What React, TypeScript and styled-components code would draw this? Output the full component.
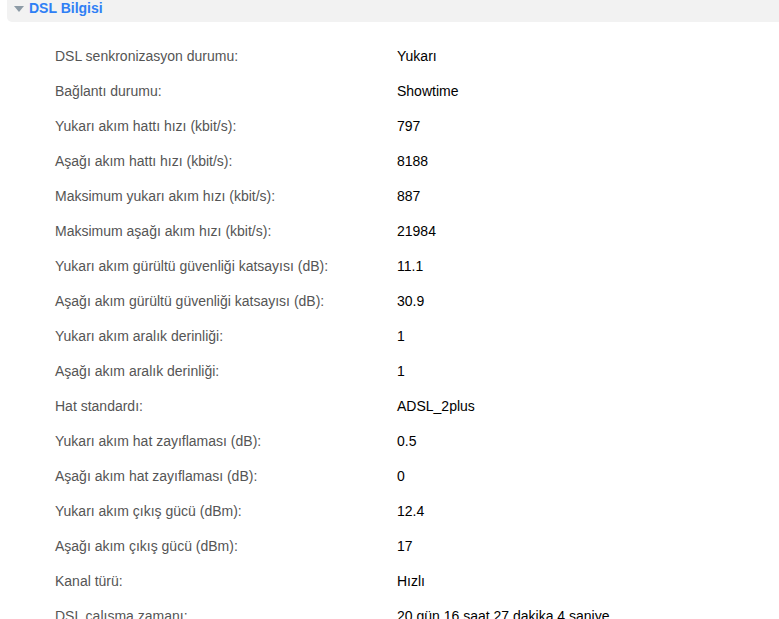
import React from 'react'
import styled, { createGlobalStyle } from 'styled-components'

const GlobalStyle = createGlobalStyle`
    html, body {
        margin: 0;
        padding: 0;
        background: #ffffff;
        font-family: "Liberation Sans", Arial, sans-serif;
        overflow: hidden;
    }
`

const Page = styled.div`
    width: 779px;
    height: 619px;
    overflow: hidden;
`

const SectionHeader = styled.div`
    display: flex;
    align-items: center;
    gap: 5px;
    height: 22px;
    margin-left: 7px;
    padding: 0 0 6px 7px;
    box-sizing: border-box;
    background-color: #f2f2f2;
    border-radius: 0 0 0 5px;
`

const Caret = styled.span`
    width: 0;
    height: 0;
    border-left: 5px solid transparent;
    border-right: 5px solid transparent;
    border-top: 6px solid #8d9ba6;
    margin-top: 2px;
`

const Title = styled.span`
    font-size: 14px;
    font-weight: bold;
    color: #2f7ff5;
    line-height: 16px;
`

const InfoTable = styled.div`
    display: grid;
    grid-template-columns: 342px 1fr;
    grid-auto-rows: 35px;
    align-items: center;
    padding: 16px 0 0 55px;
`

const Label = styled.div`
    font-size: 14px;
    color: #555555;
`

const Value = styled.div`
    font-size: 14px;
    color: #000000;
`

const rows: [string, string][] = [
    ['DSL senkronizasyon durumu:', 'Yukarı'],
    ['Bağlantı durumu:', 'Showtime'],
    ['Yukarı akım hattı hızı (kbit/s):', '797'],
    ['Aşağı akım hattı hızı (kbit/s):', '8188'],
    ['Maksimum yukarı akım hızı (kbit/s):', '887'],
    ['Maksimum aşağı akım hızı (kbit/s):', '21984'],
    ['Yukarı akım gürültü güvenliği katsayısı (dB):', '11.1'],
    ['Aşağı akım gürültü güvenliği katsayısı (dB):', '30.9'],
    ['Yukarı akım aralık derinliği:', '1'],
    ['Aşağı akım aralık derinliği:', '1'],
    ['Hat standardı:', 'ADSL_2plus'],
    ['Yukarı akım hat zayıflaması (dB):', '0.5'],
    ['Aşağı akım hat zayıflaması (dB):', '0'],
    ['Yukarı akım çıkış gücü (dBm):', '12.4'],
    ['Aşağı akım çıkış gücü (dBm):', '17'],
    ['Kanal türü:', 'Hızlı'],
    ['DSL çalışma zamanı:', '20 gün 16 saat 27 dakika 4 saniye'],
]

export default function App() {
    return (
        <Page>
            <GlobalStyle />
            <SectionHeader>
                <Caret />
                <Title>DSL Bilgisi</Title>
            </SectionHeader>
            <InfoTable>
                {rows.map(([label, value]) => (
                    <React.Fragment key={label}>
                        <Label>{label}</Label>
                        <Value>{value}</Value>
                    </React.Fragment>
                ))}
            </InfoTable>
        </Page>
    )
}
